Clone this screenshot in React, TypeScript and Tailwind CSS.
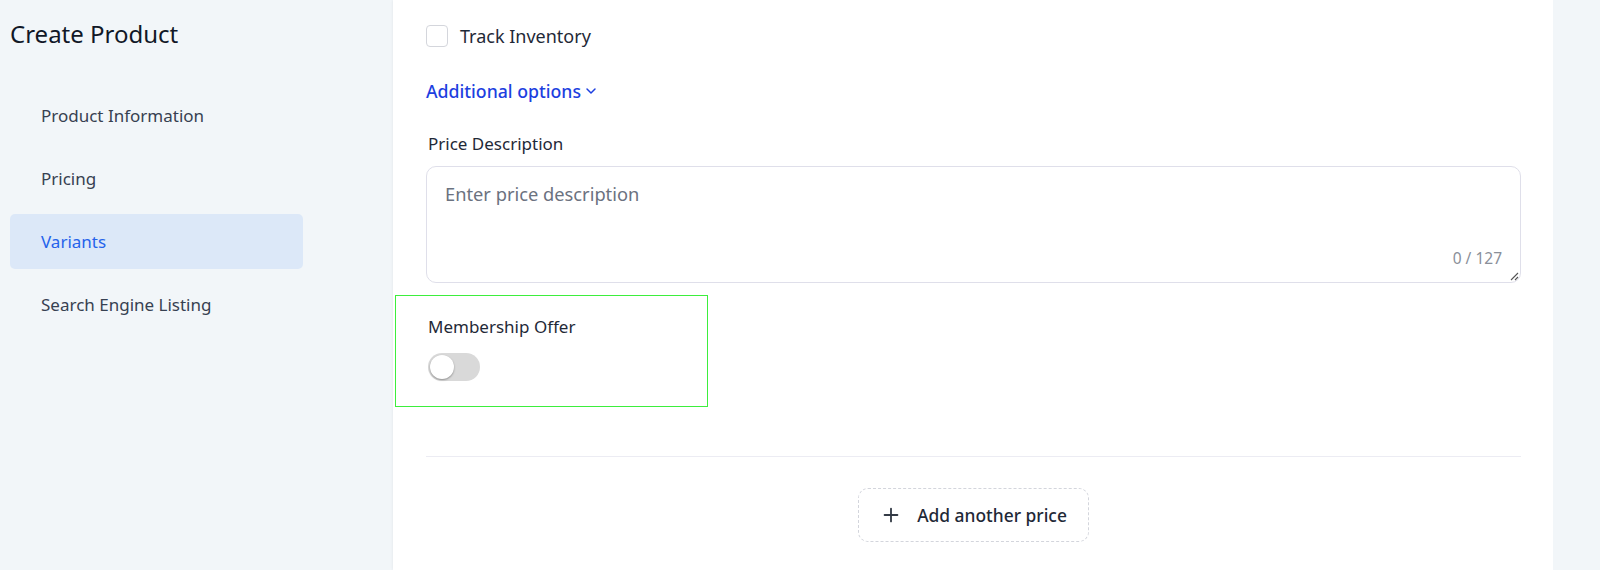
import { ChevronDown, Plus } from "lucide-react";

const NAV = ["Product Information", "Pricing", "Variants", "Search Engine Listing"];

function Sidebar() {
  return (
    <aside className="w-[393px] shrink-0 bg-[#f2f6f9] pl-[10px] pr-[90px]">
      <h1 className="pt-[18px] text-[24px] leading-[32px] text-[#111827]">Create Product</h1>
      <nav className="mt-[38px] flex flex-col gap-[8px]">
        {NAV.map((item) => (
          <div
            key={item}
            className={`h-[55px] flex items-center pl-[31px] rounded-[5px] text-[17px] ${
              item === "Variants" ? "bg-[#dce8f8] text-[#2563eb]" : "text-[#374151]"
            }`}
          >
            {item}
          </div>
        ))}
      </nav>
    </aside>
  );
}

export default function App() {
  return (
    <div
      className="flex h-[570px] w-[1600px] overflow-hidden bg-[#f2f6f9]"
      style={{ fontFamily: '"Noto Sans", "Open Sans", sans-serif' }}
    >
      <Sidebar />
      <main className="w-[1160px] shrink-0 bg-white shadow-[0_0_3px_rgba(0,0,0,0.08)] pl-[33px] pr-[32px]">
        {/* Track inventory */}
        <label className="mt-[24px] flex items-center gap-[12px]">
          <span className="w-[22px] h-[22px] rounded-[4px] border border-[#d4d6dc] bg-white" />
          <span className="text-[18px] leading-[24px] text-[#1f2937]">Track Inventory</span>
        </label>

        {/* Additional options */}
        <button className="mt-[30px] flex items-center gap-[2px] text-[17.7px] leading-[26px] font-medium text-[#1d3fe0]">
          Additional options
          <ChevronDown className="w-[16px] h-[16px]" strokeWidth={2.2} />
        </button>

        {/* Price description */}
        <div className="mt-[28px]">
          <div className="pl-[2px] text-[17px] text-[#1f2937] leading-[24px]">Price Description</div>
          <div className="relative mt-[10px] h-[117px] rounded-[10px] border border-[#dfdfea]">
            <div className="pl-[18px] pt-[13px] text-[18.3px] text-[#6b7280]">Enter price description</div>
            <div className="absolute right-[18px] bottom-[12px] text-[15.5px] text-[#8a8f99]">0 / 127</div>
            <svg className="absolute right-[1px] bottom-[1px] w-[10px] h-[10px]" viewBox="0 0 10 10">
              <path d="M9 2L2 9M9 6L6 9" stroke="#555" strokeWidth="1.1" />
            </svg>
          </div>
        </div>

        {/* Membership offer */}
        <div className="-ml-[31px] mt-[12px] w-[313px] h-[112px] border border-[#3dee3d] pl-[32px] pt-[19px]">
          <div className="text-[17px] text-[#1f2937] leading-[24px]">Membership Offer</div>
          <div className="mt-[14px] w-[52px] h-[28px] rounded-full bg-[#d9d9d9] flex items-center pl-[2px]">
            <span className="w-[24px] h-[24px] rounded-full bg-white shadow-[0_1px_2px_rgba(0,0,0,0.35)]" />
          </div>
        </div>

        <div className="mt-[49px] h-px bg-[#ececf3]" />

        <div className="mt-[31px] flex justify-center">
          <button className="h-[54px] w-[231px] rounded-[10px] border border-dashed border-[#d3d5dc] flex items-center justify-center gap-[15px] text-[17.4px] font-medium text-[#1f2937]">
            <Plus className="w-[22px] h-[22px] text-[#333a45]" strokeWidth={2} />
            Add another price
          </button>
        </div>
      </main>
      <div className="flex-1 bg-[#f2f6f9]" />
    </div>
  );
}
